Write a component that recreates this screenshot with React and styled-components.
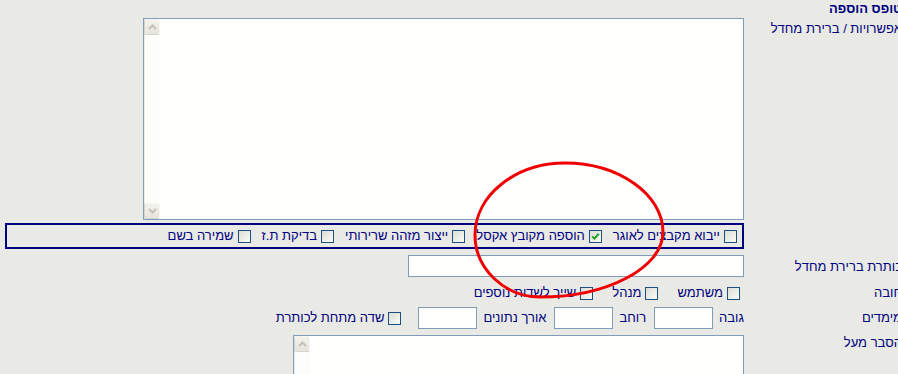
import React from "react";
import styled, { createGlobalStyle } from "styled-components";

const Global = createGlobalStyle`
  html, body { margin: 0; padding: 0; background: #e9eae6; overflow: hidden; }
  body { font-family: "Liberation Sans", Arial, sans-serif; }
`;

const Page = styled.div`
  position: relative;
  width: 904px;
  direction: rtl;
  font-family: "Liberation Sans", Arial, sans-serif;
  font-size: 13px;
  color: #000080;
`;

const Row = styled.div`
  display: grid;
  grid-template-columns: 160px 744px;
  margin-top: ${(p) => p.$mt || 0}px;
  min-height: ${(p) => p.$h || 0}px;
`;

const Label = styled.div`
  padding-right: 2px;
  padding-top: ${(p) => p.$top || 0}px;
  font-weight: ${(p) => (p.$bold ? "bold" : "normal")};
  line-height: 16px;
  white-space: nowrap;
`;

const Cell = styled.div`
  display: flex;
  align-items: center;
  gap: ${(p) => p.$gap || 0}px;
  padding-right: ${(p) => p.$pr || 0}px;
`;

const AreaBox = styled.div`
  display: flex;
  width: ${(p) => p.$w}px;
  height: ${(p) => p.$h}px;
  box-sizing: border-box;
  border: 1px solid #7f9db9;
  background: #fffffd;
`;

const Area = styled.textarea`
  flex: 1;
  border: 0;
  outline: none;
  resize: none;
  background: transparent;
  overflow: hidden;
  padding: 2px;
  margin: 0;
`;

const ScrollTrack = styled.div`
  width: 16px;
  box-sizing: border-box;
  border-left: 1px solid #ecebe4;
  display: flex;
  flex-direction: column;
  justify-content: space-between;
  background: #fdfdfa;
`;

const ScrollBtn = styled.div`
  width: 16px;
  height: 16px;
  box-sizing: border-box;
  border: 1px solid #f7f6f0;
  border-bottom-color: #d6d5cb;
  border-left-color: #d6d5cb;
  border-radius: 2px;
  background: linear-gradient(#f3f2ec, #e6e5dc);
  display: flex;
  align-items: center;
  justify-content: center;
`;

const GroupBox = styled.div`
  width: 739px;
  height: 26px;
  box-sizing: border-box;
  border: 2px solid #000080;
  display: flex;
  align-items: center;
  padding-right: 5px;
  gap: 11px;
`;

const Item = styled.label`
  display: inline-flex;
  align-items: center;
  gap: 4px;
  white-space: nowrap;
  line-height: 16px;
  margin-right: ${(p) => p.$mr || 0}px;
`;

const Box = styled.span`
  width: 13px;
  height: 13px;
  box-sizing: border-box;
  border: 1px solid #1c5180;
  background: linear-gradient(135deg, #dcdcd5, #fbfbf9);
  display: inline-flex;
  align-items: center;
  justify-content: center;
  flex: none;
`;

const Input = styled.input`
  width: ${(p) => p.$w}px;
  height: 22px;
  box-sizing: border-box;
  border: 1px solid #7f9db9;
  background: #fffffd;
  margin: 0;
  padding: 0 2px;
  outline: none;
`;

const Text = styled.span`
  white-space: nowrap;
  line-height: 16px;
  margin-right: ${(p) => p.$mr || 0}px;
`;

const Ellipse = styled.svg`
  position: absolute;
  left: 0;
  top: 0;
  pointer-events: none;
`;

const Check = ({ checked, mr, children }) => (
  <Item $mr={mr}>
    <Box>
      {checked && (
        <svg width="9" height="9" viewBox="0 0 9 9">
          <path d="M1.2 4.4 L3.4 6.6 L7.8 1.8" fill="none" stroke="#21a121" strokeWidth="2" />
        </svg>
      )}
    </Box>
    {children}
  </Item>
);

const Chevron = ({ down }) => (
  <svg width="9" height="6" viewBox="0 0 9 6">
    <path
      d={down ? "M1 1 L4.5 4.5 L8 1" : "M1 5 L4.5 1.5 L8 5"}
      fill="none"
      stroke="#c3c2b6"
      strokeWidth="2"
    />
  </svg>
);

const TextArea = ({ w, h, bottom = true }) => (
  <AreaBox $w={w} $h={h}>
    <Area />
    <ScrollTrack>
      <ScrollBtn>
        <Chevron />
      </ScrollBtn>
      {bottom && (
        <ScrollBtn>
          <Chevron down />
        </ScrollBtn>
      )}
    </ScrollTrack>
  </AreaBox>
);

export default function App() {
  return (
    <Page>
      <Global />
      <Row $h={18}>
        <Label $bold $top={1}>טופס הוספה</Label>
        <Cell />
      </Row>

      <Row>
        <Label $top={3}>אפשרויות / ברירת מחדל</Label>
        <Cell>
          <TextArea w={601} h={202} />
        </Cell>
      </Row>

      <Row $mt={3}>
        <div />
        <Cell>
          <GroupBox>
            <Check>ייבוא מקבצים לאוגר</Check>
            <Check checked>הוספה מקובץ אקסל</Check>
            <Check>ייצור מזהה שרירותי</Check>
            <Check>בדיקת ת.ז</Check>
            <Check>שמירה בשם</Check>
          </GroupBox>
        </Cell>
      </Row>

      <Row $mt={6}>
        <Label $top={4}>כותרת ברירת מחדל</Label>
        <Cell>
          <Input $w={336} />
        </Cell>
      </Row>

      <Row $mt={8} $h={16}>
        <Label $top={0}>חובה</Label>
        <Cell $pr={4} $gap={19}>
          <Check>משתמש</Check>
          <Check>מנהל</Check>
          <Check>שייך לשדות נוספים</Check>
        </Cell>
      </Row>

      <Row $mt={6}>
        <Label $top={3}>מימדים</Label>
        <Cell $gap={6}>
          <Text>גובה</Text>
          <Input $w={59} />
          <Text $mr={2}>רוחב</Text>
          <Input $w={59} />
          <Text $mr={2}>אורך נתונים</Text>
          <Input $w={59} />
          <Check mr={11}>שדה מתחת לכותרת</Check>
        </Cell>
      </Row>

      <Row $mt={6}>
        <Label $top={0}>הסבר מעל</Label>
        <Cell>
          <TextArea w={451} h={60} bottom={false} />
        </Cell>
      </Row>

      <Ellipse width="898" height="374">
        <path
          d="M565,163 C618,163 663,194 663,232 C663,268 607,297 540,297 C505,297 475,269 475,235 C475,195 516,163 565,163 Z"
          fill="none"
          stroke="#f00000"
          strokeWidth="3"
        />
      </Ellipse>
    </Page>
  );
}
